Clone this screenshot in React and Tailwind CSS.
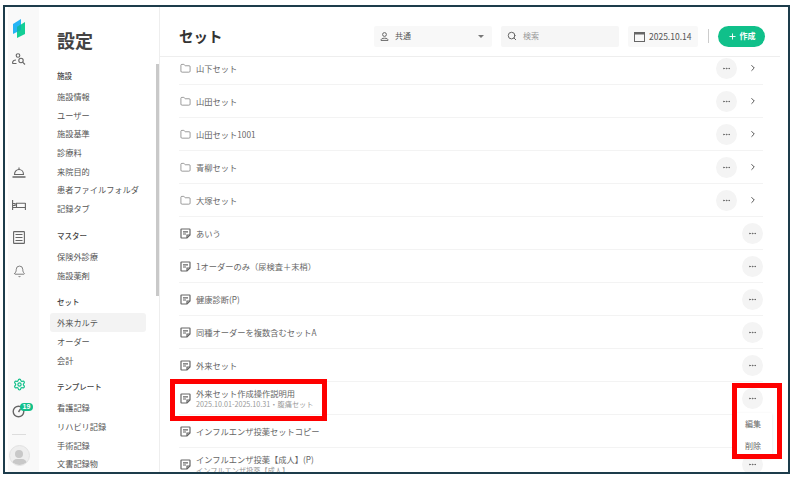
import React from 'react';
import { Search, Plus, ChevronRight, Ellipsis, Folder, Bell, Settings } from 'lucide-react';

const navGroups = [
  { title: '施設', items: ['施設情報', 'ユーザー', '施設基準', '診療料', '来院目的', '患者ファイルフォルダ', '記録タブ'] },
  { title: 'マスター', items: ['保険外診療', '施設薬剤'] },
  { title: 'セット', items: ['外来カルテ', 'オーダー', '会計'] },
  { title: 'テンプレート', items: ['看護記録', 'リハビリ記録', '手術記録', '文書記録物'] },
];

const folders = ['山下セット', '山田セット', '山田セット1001', '青柳セット', '大塚セット'];
const sets = ['あいう', '1オーダーのみ（尿検査＋末梢）', '健康診断(P)', '同種オーダーを複数含むセットA', '外来セット'];

function NoteIcon() {
  return (
    <svg width="11" height="11" viewBox="0 0 11 11" fill="none" stroke="#666" strokeWidth="1.2" className="shrink-0 ml-px">
      <path d="M1.5 1h8a.5.5 0 0 1 .5.5V7l-3 3H1.5a.5.5 0 0 1-.5-.5v-8a.5.5 0 0 1 .5-.5z" />
      <path d="M3 3.8h5M3 6h3" />
      <path d="M7 10V7h3" />
    </svg>
  );
}

function MoreButton() {
  return (
    <div className="w-[21px] h-[21px] rounded-full bg-[#f4f4f4] flex items-center justify-center shrink-0">
      <Ellipsis size={9} strokeWidth={2.5} color="#666" />
    </div>
  );
}

function FolderRow({ name }) {
  return (
    <div className="h-[33px] flex items-center border-b border-[#f3f3f3] mr-[25px]">
      <Folder size={11} strokeWidth={1.4} color="#666" className="shrink-0 ml-px" />
      <span className="ml-[5px] text-[8.25px] text-[#666] flex-1">{name}</span>
      <MoreButton />
      <div className="w-[26px] flex justify-end pr-[5px]">
        <ChevronRight size={10} strokeWidth={2.4} color="#555" />
      </div>
    </div>
  );
}

function SetRow({ name, sub }) {
  return (
    <div className="h-[33px] flex items-center border-b border-[#f3f3f3] mr-[25px]">
      <NoteIcon />
      <div className="ml-[5px] flex-1 min-w-0">
        <div className="text-[8.25px] leading-[12px] text-[#666]">{name}</div>
        {sub && <div className="text-[7.2px] leading-[11px] text-[#999]">{sub}</div>}
      </div>
      <MoreButton />
    </div>
  );
}

export default function App() {
  return (
    <div className="w-[801px] h-[480px] bg-white pl-[3px] pt-[5px] overflow-hidden font-['Noto_Sans_CJK_JP','Noto_Sans',sans-serif]">
      <div className="w-[787px] h-[469px] border-2 border-[#1d3c4b] flex overflow-hidden relative">
        {/* icon rail */}
        <div className="w-[31px] ml-[3px] pr-[9px] bg-[#f9f9f9] flex flex-col items-center shrink-0 pt-[12px]">
          <svg width="12" height="19" viewBox="0 0 12 19" className="shrink-0">
            <path d="M0 5l8-5v11l-8 4z" fill="#25b4f5" />
            <path d="M4 8l8-5v12l-8 4z" fill="#14cf96" />
            <path d="M4 8l4-2.500V11l-4 2z" fill="#10b5ad" />
          </svg>
          <svg width="14" height="12" viewBox="0 0 14 12" fill="none" stroke="#666" strokeWidth="1.1" className="mt-[15px] shrink-0">
            <circle cx="6" cy="2.500" r="1.800" />
            <path d="M0.500 10.500c0-2.500 2-3.500 3.500-3.500M0.500 10.500h4" />
            <circle cx="9" cy="7.500" r="2.200" />
            <path d="M10.600 9.200l2.400 2.300" />
          </svg>
          <svg width="14" height="11" viewBox="0 0 14 11" fill="none" stroke="#666" strokeWidth="1.1" className="mt-[102px] shrink-0">
            <path d="M2.500 7.500c0-3 2-5 4.500-5s4.500 2 4.500 5z" />
            <path d="M7 0.500v2" />
            <path d="M0.500 10h13" strokeWidth="1.500" />
          </svg>
          <svg width="14" height="10" viewBox="0 0 14 10" fill="none" stroke="#666" strokeWidth="1.1" className="mt-[22px] shrink-0">
            <path d="M0.600 0v10M13.400 3v7M0.600 7.500h12.800M4.500 7.500V3.200h8.900M0.600 3.500h2.500v2H0.600" />
          </svg>
          <svg width="12" height="13" viewBox="0 0 12 13" fill="none" stroke="#666" strokeWidth="1.1" className="mt-[21px] shrink-0">
            <rect x="0.600" y="0.600" width="10.800" height="11.800" rx="0.500" />
            <path d="M2.500 3.500h7M2.500 6.500h7M2.500 9.500h7" />
          </svg>
          <Bell size={13} strokeWidth={1.5} color="#666" className="mt-[21px] shrink-0" />
          <Settings size={13} strokeWidth={2.2} color="#10c08a" className="mt-[100px] shrink-0" />
          <div className="relative mt-[14px] w-[14px] h-[14px] shrink-0">
            <svg width="13" height="13" viewBox="0 0 13 13" fill="none" stroke="#666" strokeWidth="1.4">
              <circle cx="6.500" cy="6.500" r="5.300" />
              <path d="M6.500 7l2-3" />
            </svg>
            <div className="absolute -top-[2px] left-[8px] w-[13px] h-[8px] rounded-full bg-[#10c08a] text-white text-[7px] leading-[8px] font-bold text-center font-['Liberation_Sans',sans-serif]">19</div>
          </div>
          <div className="w-[14px] h-px bg-[#ddd] mt-[15px] shrink-0" />
          <div className="mt-[10px] w-[21px] h-[21px] rounded-full bg-[#eeeeee] border border-[#e2e2e2] overflow-hidden relative shrink-0">
            <div className="w-[8px] h-[8px] rounded-full bg-[#c8c8c8] mx-auto mt-[4px]" />
            <div className="w-[15px] h-[10px] rounded-full bg-[#c8c8c8] mx-auto mt-px" />
          </div>
        </div>

        {/* settings nav */}
        <div className="w-[121px] shrink-0 border-r border-[#eee] relative overflow-hidden pl-[13px]">
          <h1 className="text-[18px] leading-[26px] font-bold text-[#444] mt-[20px] mb-[17px] ml-[5px]">設定</h1>
          <div className="pl-[5px]">
            {navGroups.map((g) => (
              <div key={g.title} className="mb-[12px]">
                <div className="text-[7.5px] leading-[12px] font-medium text-[#444] mb-[5px]">{g.title}</div>
                {g.items.map((item) => (
                  <div
                    key={item}
                    className={`text-[8.2px] h-[18.7px] leading-[18.7px] text-[#555] whitespace-nowrap ${
                      item === '外来カルテ' ? 'bg-[#f3f3f3] rounded-[3px] -ml-[7px] pl-[7px] w-[96px]' : ''
                    }`}
                  >
                    {item}
                  </div>
                ))}
              </div>
            ))}
          </div>
          <div className="absolute right-0 top-[57px] w-[3px] h-[232px] bg-[#c9c9c9]" />
        </div>

        {/* main */}
        <div className="flex-1 min-w-0 flex flex-col">
          <div className="h-[50px] shrink-0 flex items-center border-b border-[#eee] mr-[8px] pl-[19px] pt-[9px]">
            <div className="text-[14.500px] font-bold text-[#333] flex-1">セット</div>
            <div className="w-[118px] h-[21px] bg-[#f8f8f8] rounded-[2px] flex items-center pl-[6px] pr-[8px]">
              <svg width="9" height="9" viewBox="0 0 9 9" fill="none" stroke="#666" strokeWidth="1">
                <circle cx="4.500" cy="2.500" r="1.900" />
                <path d="M1 8.400h7M1 8.400c0-1.500 1-2.200 3.500-2.200s3.500.7 3.500 2.200" />
              </svg>
              <span className="ml-[6px] text-[8px] text-[#555] flex-1">共通</span>
              <span className="w-0 h-0 border-x-[3px] border-x-transparent border-t-[3px] border-t-[#777]" />
            </div>
            <div className="w-[118px] h-[21px] bg-[#f6f6f6] rounded-[2px] flex items-center px-[6px] ml-[9px]">
              <Search size={10} strokeWidth={2.4} color="#666" />
              <span className="ml-[6px] text-[8px] text-[#999]">検索</span>
            </div>
            <div className="w-[70px] h-[21px] bg-[#f8f8f8] rounded-[2px] flex items-center px-[6px] ml-[9px]">
              <svg width="11" height="11" viewBox="0 0 11 11" fill="none" stroke="#666" strokeWidth="1">
                <rect x="0.500" y="1.500" width="10" height="9" />
                <path d="M0.500 2.500h10" strokeWidth="2" />
              </svg>
              <span className="ml-[4px] text-[8.500px] text-[#555]">2025.10.14</span>
            </div>
            <div className="w-px h-[14px] bg-[#ccc] ml-[10px]" />
            <div className="w-[47px] h-[21px] rounded-full bg-[#10c08a] flex items-center justify-center ml-[9px] mr-[15px]">
              <Plus size={9} strokeWidth={2.5} color="#fff" />
              <span className="ml-[3px] text-[8px] font-bold text-white">作成</span>
            </div>
          </div>

          <div className="flex-1 min-h-0 overflow-hidden pl-[19px]">
            <div className="-mt-[5px]">
              {folders.map((f) => (
                <FolderRow key={f} name={f} />
              ))}
              {sets.map((s) => (
                <SetRow key={s} name={s} />
              ))}
              <SetRow name="外来セット作成操作説明用" sub="2025.10.01-2025.10.31・腹痛セット" />
              <SetRow name="インフルエンザ投薬セットコピー" />
              <SetRow name="インフルエンザ投薬【成人】(P)" sub="インフルエンザ投薬【成人】" />
            </div>
          </div>
        </div>

        {/* row menu, then the red annotation boxes over it */}
        <div className="absolute left-[729px] top-[406px] w-[38px] h-[44px] bg-white shadow-sm text-[8px] text-[#666] flex flex-col items-center">
          <span className="h-[22px] leading-[22px]">編集</span>
          <span className="h-[22px] leading-[22px]">削除</span>
        </div>
        <div className="absolute left-[165px] top-[372px] w-[157px] h-[42px] border-[5px] border-[#fe0000]" />
        <div className="absolute left-[727px] top-[376px] w-[50px] h-[76px] border-[5px] border-[#fe0000]" />
      </div>
    </div>
  );
}
